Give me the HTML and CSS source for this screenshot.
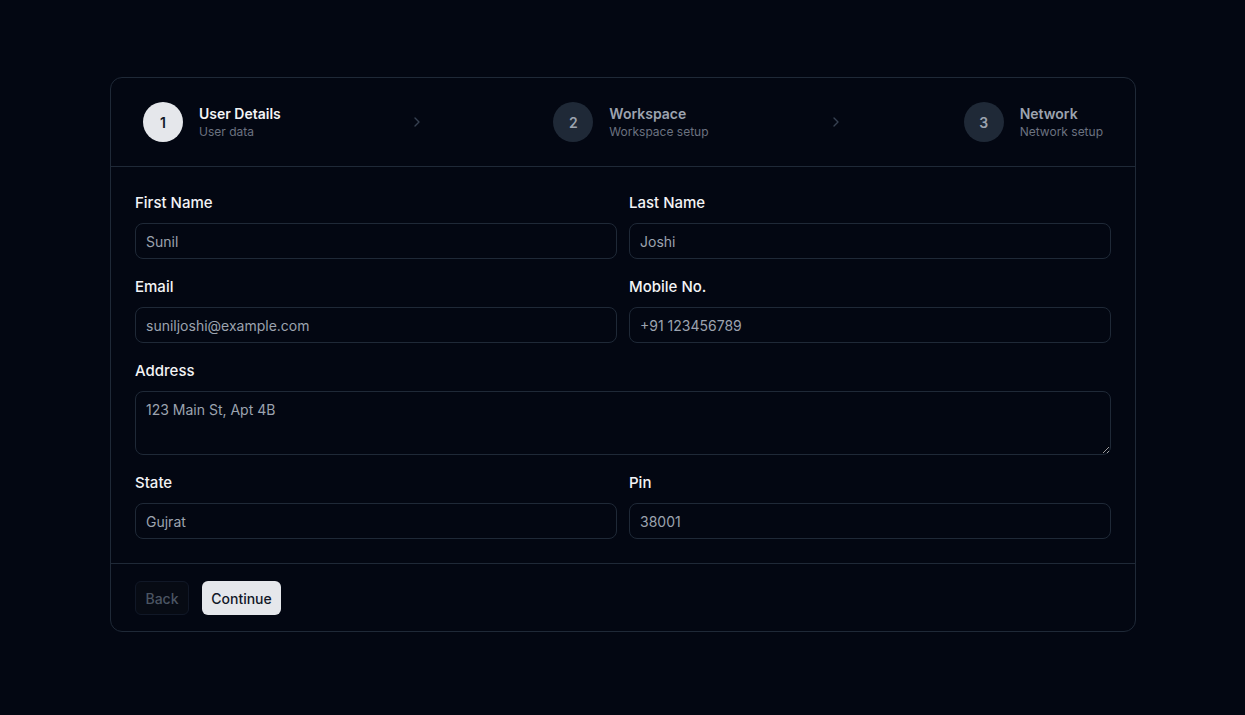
FILE: index.html
```
<!DOCTYPE html>
<html lang="en">
<head>
    <meta charset="UTF-8">
    <title>Stepper Form</title>
    <link rel="stylesheet" href="styles.css">
</head>
<body>

<div class="card">
    <!-- Steps -->
    <div class="steps">
        <div class="step-group">
            <div class="step active">
                <div class="step-num">1</div>
                <div class="step-text">
                    <div class="step-title">User Details</div>
                    <div class="step-sub">User data</div>
                </div>
            </div>
            <div class="step-sep">
                <svg class="chevron" width="6" height="10" viewBox="0 0 6 10"><path d="M1 1l4 4-4 4" fill="none" stroke="currentColor" stroke-width="1.4" stroke-linecap="round" stroke-linejoin="round"/></svg>
            </div>
        </div>
        <div class="step-group">
            <div class="step">
                <div class="step-num">2</div>
                <div class="step-text">
                    <div class="step-title">Workspace</div>
                    <div class="step-sub">Workspace setup</div>
                </div>
            </div>
            <div class="step-sep">
                <svg class="chevron" width="6" height="10" viewBox="0 0 6 10"><path d="M1 1l4 4-4 4" fill="none" stroke="currentColor" stroke-width="1.4" stroke-linecap="round" stroke-linejoin="round"/></svg>
            </div>
        </div>
        <div class="step">
            <div class="step-num">3</div>
            <div class="step-text">
                <div class="step-title">Network</div>
                <div class="step-sub">Network setup</div>
            </div>
        </div>
    </div>

    <!-- Form -->
    <form class="form">
        <div class="field">
            <label for="firstName">First Name</label>
            <input type="text" id="firstName" value="Sunil">
        </div>
        <div class="field">
            <label for="lastName">Last Name</label>
            <input type="text" id="lastName" value="Joshi">
        </div>
        <div class="field">
            <label for="email">Email</label>
            <input type="text" id="email" value="suniljoshi@example.com">
        </div>
        <div class="field">
            <label for="mobile">Mobile No.</label>
            <input type="text" id="mobile" value="+91 123456789">
        </div>
        <div class="field full">
            <label for="address">Address</label>
            <textarea id="address">123 Main St, Apt 4B</textarea>
        </div>
        <div class="field">
            <label for="state">State</label>
            <input type="text" id="state" value="Gujrat">
        </div>
        <div class="field">
            <label for="pin">Pin</label>
            <input type="text" id="pin" value="38001">
        </div>
    </form>

    <div class="actions">
        <button class="btn btn-back" disabled>Back</button>
        <button class="btn btn-primary">Continue</button>
    </div>
</div>

</body>
</html>
```

FILE: styles.css
```
body {
    font-family: Inter, "Noto Sans", sans-serif;
    margin: 0;
    padding: 77px 0 0;
    background: #030712;
    color: #f3f4f6;
}
.card {
    width: 1026px;
    margin: 0 0 0 110px;
    border: 1px solid #1f2937;
    border-radius: 12px;
    box-sizing: border-box;
}
.steps {
    display: flex;
    align-items: center;
    padding: 24px 32px;
    border-bottom: 1px solid #1f2937;
}
.step-group {
    flex: 1;
    display: flex;
    align-items: center;
}
.step-sep {
    flex: 1;
    display: flex;
    justify-content: center;
}
.step {
    display: flex;
    align-items: center;
    gap: 16px;
}
.step-num {
    width: 40px;
    height: 40px;
    border-radius: 50%;
    background: #1f2937;
    color: #9ca3af;
    font-size: 14px;
    font-weight: 600;
    display: flex;
    align-items: center;
    justify-content: center;
}
.step-title {
    font-size: 14px;
    font-weight: 600;
    color: #9ca3af;
    line-height: 20px;
}
.step-sub {
    font-size: 12px;
    color: #6b7280;
    line-height: 16px;
}
.step.active .step-num {
    background: #e5e7eb;
    color: #111827;
}
.step.active .step-title {
    color: #f3f4f6;
}
.chevron {
    color: #374151;
    display: block;
}
.form {
    display: grid;
    grid-template-columns: 1fr 1fr;
    column-gap: 12px;
    row-gap: 16px;
    padding: 24px;
    border-bottom: 1px solid #1f2937;
}
.field {
    display: flex;
    flex-direction: column;
    gap: 8px;
}
.field.full {
    grid-column: 1 / 3;
}
label {
    font-size: 15px;
    font-weight: 500;
    line-height: 24px;
    color: #f3f4f6;
}
input[type="text"],
textarea {
    font-family: inherit;
    font-size: 14px;
    color: #9ca3af;
    background: transparent;
    border: 1px solid #1f2937;
    border-radius: 8px;
    padding: 0 10px;
    height: 36px;
    box-sizing: border-box;
    outline: none;
}
textarea {
    height: 64px;
    padding: 8px 10px;
    line-height: 20px;
    resize: vertical;
}
.actions {
    display: flex;
    gap: 13px;
    padding: 17px 24px 16px;
}
.btn {
    font-family: inherit;
    font-size: 14px;
    height: 34px;
    padding: 0 9px;
    border-radius: 6px;
    font-weight: 500;
}
.btn-back {
    background: #070b14;
    border: 1px solid #111827;
    color: #4b5563;
    width: 54px;
}
.btn-primary {
    background: #e5e7eb;
    border: none;
    color: #111827;
    width: 79px;
    cursor: pointer;
}
```
